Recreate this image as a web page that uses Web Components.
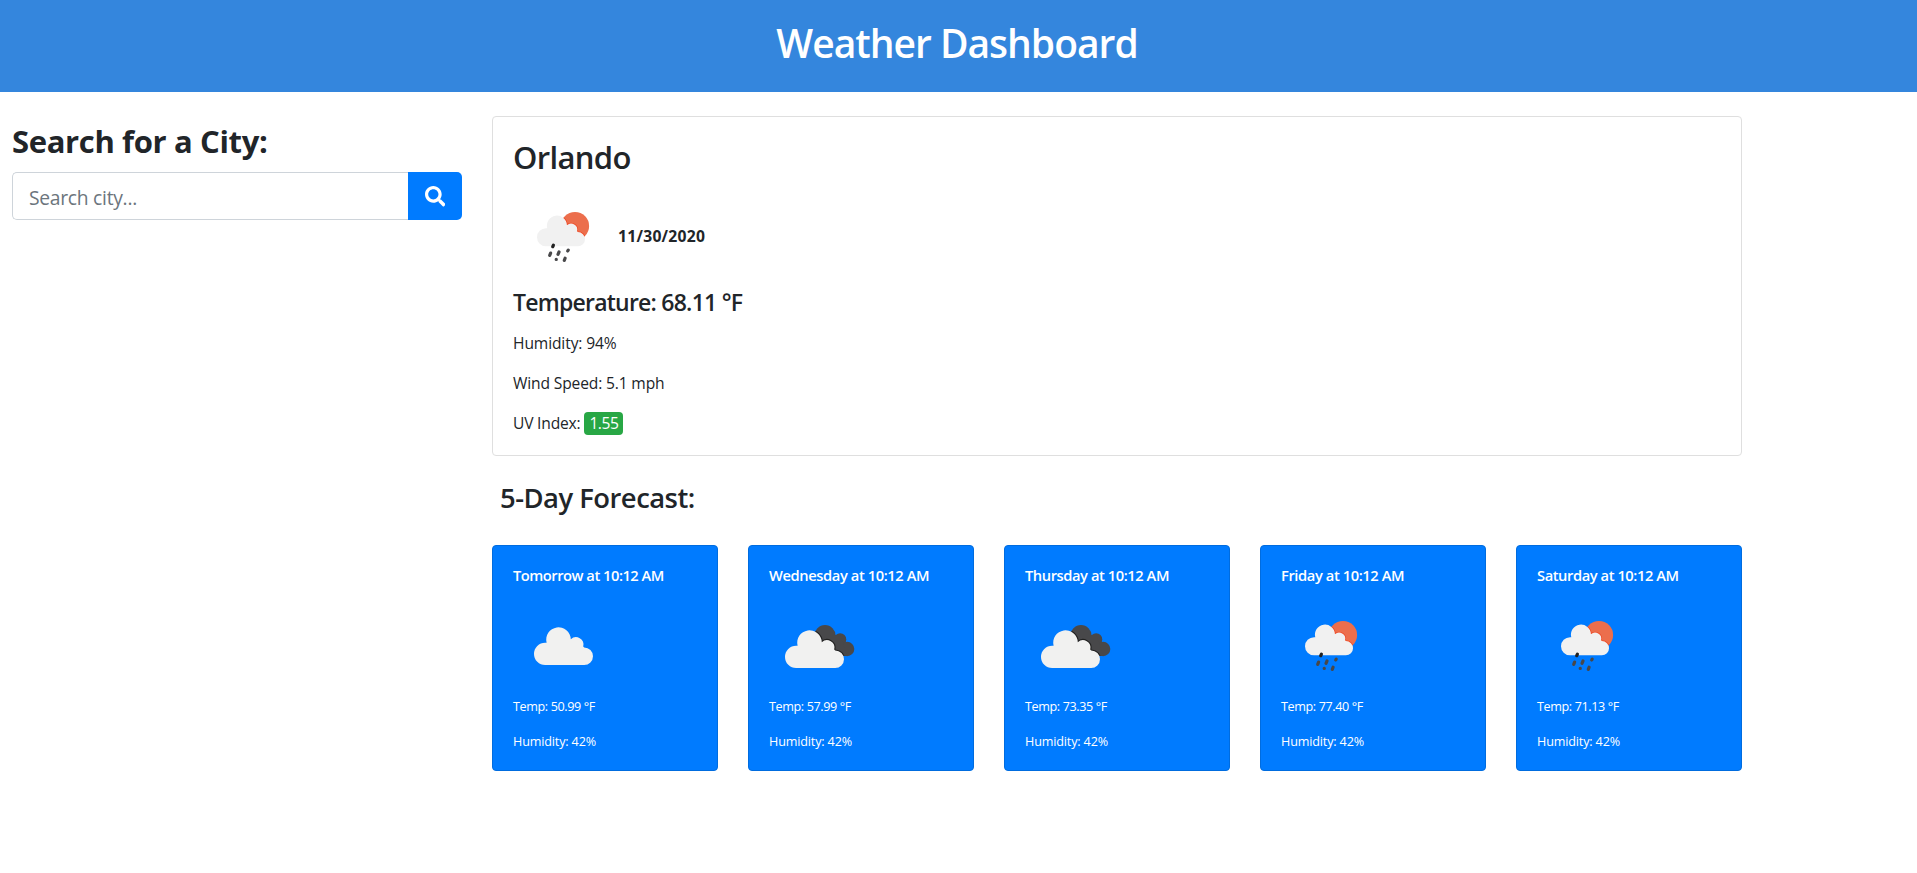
<!DOCTYPE html>
<html lang="en">
<head>
<meta charset="utf-8">
<title>Weather Dashboard</title>
<style>
body { margin: 0; background: #fff; color: #212529; font-family: "Open Sans", "Noto Sans", sans-serif; }
</style>
</head>
<body>
<weather-app></weather-app>
<script>
const define = (name, html, setup) => {
  const template = document.createElement('template');
  template.innerHTML = html;
  customElements.define(name, class extends HTMLElement {
    constructor() {
      super();
      this.attachShadow({ mode: 'open' }).append(template.content.cloneNode(true));
    }
    connectedCallback() { if (setup) setup(this, this.shadowRoot); }
  });
};

define('app-header', `
<style>
:host { display: block; box-sizing: border-box; height: 92px; padding: 18px 3px 0 0; background: #3486dd; color: #fff; text-align: center; }
h1 { margin: 0; font-size: 39px; line-height: 49px; font-weight: 600; letter-spacing: -1px; }
</style>
<h1><slot></slot></h1>`);

define('city-search', `
<style>
:host { display: block; }
h2 { margin: 0 0 12px; font-size: 31px; line-height: 38px; font-weight: 700; letter-spacing: -.35px; }
.group { display: flex; height: 48px; }
input { flex: 1; min-width: 0; box-sizing: border-box; height: 48px; margin: 0; padding: 3px 16px 0; border: 1px solid #ced4da; border-right: 0; border-radius: 5px 0 0 5px; background: #fff; color: #495057; font: 19.3px "Open Sans", sans-serif; letter-spacing: -.28px; outline: 0; }
input::placeholder { color: #6c757d; opacity: 1; }
button { width: 54px; height: 48px; margin: 0; padding: 1px 0 0; border: 0; border-radius: 0 5px 5px 0; background: #007bff; display: flex; align-items: center; justify-content: center; }
svg { width: 20.500px; height: 20.500px; display: block; }
</style>
<h2><slot></slot></h2>
<div class="group">
<input type="text" placeholder="Search city..." aria-label="City">
<button aria-label="Search"><svg viewBox="0 0 512 512"><path fill="#fff" d="M505 442.7L405.3 343c-4.5-4.5-10.6-7-17-7H372c27.6-35.3 44-79.7 44-128C416 93.1 322.9 0 208 0S0 93.1 0 208s93.1 208 208 208c48.300 0 92.700-16.400 128-44v16.300c0 6.400 2.500 12.500 7 17l99.700 99.700c9.400 9.400 24.600 9.400 33.900 0l28.300-28.300c9.400-9.400 9.400-24.600.1-34zM208 336c-70.700 0-128-57.200-128-128 0-70.700 57.200-128 128-128 70.700 0 128 57.200 128 128 0 70.700-57.200 128-128 128z"/></svg></button>
</div>`);

const cloud = 'M32.200 70.100A11.200 11.200 0 0 1 32.200 47.700L33.600 47.700A12.300 12.300 0 1 1 57.800 44.200A7.500 7.500 0 0 1 70.200 51.500L71.200 52.500A8.800 8.800 0 0 1 71.200 70.100Z';
const icons = {
  cloud: `<path fill="#f1f1f0" d="${cloud}"/>`,
  clouds: `<g fill="#48484a"><circle cx="56" cy="40.700" r="10.600"/><circle cx="71.200" cy="44.400" r="6.100"/><circle cx="78.100" cy="54" r="7.200"/><path d="M56 40h15l7 21H56z"/></g>
    <clipPath id="dark"><circle cx="56" cy="40.700" r="10.600"/><circle cx="71.200" cy="44.400" r="6.100"/><circle cx="78.100" cy="54" r="7.200"/><path d="M56 40h15l7 21H56z"/></clipPath>
    <g clip-path="url(#dark)"><path transform="translate(-5 3)" fill="none" stroke="#222" stroke-width="2.200" d="${cloud}"/></g>
    <path transform="translate(-5 3)" fill="#f1f1f0" d="${cloud}"/>`,
  rain: `<circle cx="62" cy="40" r="14.100" fill="#ec6e4c"/>
    <clipPath id="sun"><circle cx="62" cy="40" r="14.100"/></clipPath>
    <g clip-path="url(#sun)"><path transform="translate(6.900 3.300) scale(.814)" fill="none" stroke="#ee4d2a" stroke-width="2" d="${cloud}"/></g>
    <path transform="translate(6.900 3.300) scale(.814)" fill="#f1f1f1" d="${cloud}"/>
    <g stroke="#48484a" stroke-width="3.200" stroke-linecap="round"><path stroke="#222" d="M39.700 60.700l.7-1.500"/><path d="M36.700 69.400l.9-2.300M45 68.300l1-2.300M54.700 65l.5-.8M43.200 73.400h.1M51.300 74.400l.8-2.200"/></g>`
};

define('weather-icon', `
<style>:host { display: block; width: 100px; height: 100px; } svg { display: block; }</style>
<svg width="100" height="100" viewBox="0 0 100 100"></svg>`, (el, root) => {
  root.querySelector('svg').innerHTML = icons[el.getAttribute('kind')] || '';
});

define('uv-badge', `
<style>:host { display: inline-block; box-sizing: border-box; width: 39px; height: 23px; border-radius: 4px; background: #28a745; color: #fff; text-align: center; line-height: 23px; letter-spacing: -.5px; }</style><slot></slot>`);

define('current-weather', `
<style>
:host { display: flex; flex-direction: column; box-sizing: border-box; height: 340px; padding: 21px 20px 0; border: 1px solid #dfdfdf; border-radius: 4px; font-size: 15.600px; }
h2 { margin: 0 0 10px; font-size: 31px; line-height: 38px; font-weight: 600; letter-spacing: -.65px; }
.today { display: flex; align-items: center; gap: 5px; height: 100px; }
time { font-weight: 700; font-size: 15.700px; line-height: 24px; letter-spacing: .25px; }
h3 { margin: 2px 0 14px; font-size: 23px; line-height: 29px; font-weight: 600; letter-spacing: -.76px; }
p { margin: 0 0 16px; line-height: 24px; height: 24px; }
.h { letter-spacing: -.12px; } .w { letter-spacing: -.15px; }
.uv { display: flex; align-items: center; gap: 4px; letter-spacing: -.2px; }
</style>
<h2><slot name="city"></slot></h2>
<div class="today"><weather-icon kind="rain"></weather-icon><time><slot name="date"></slot></time></div>
<h3><slot name="temp"></slot></h3>
<p class="h"><slot name="humidity"></slot></p>
<p class="w"><slot name="wind"></slot></p>
<p class="uv"><span>UV Index:</span><uv-badge><slot name="uv"></slot></uv-badge></p>`);

define('forecast-card', `
<style>
:host { display: block; box-sizing: border-box; height: 226px; padding: 20px; border: 1px solid #006cdf; border-radius: 4px; background: #007bff; color: #fff; font-size: 12.600px; }
h5 { margin: 0 0 11px; font-size: 14.700px; line-height: 18px; font-weight: 600; letter-spacing: var(--track, -.43px); white-space: nowrap; }
p { margin: 2px 0 0; line-height: 20px; letter-spacing: -.38px; }
p + p { margin-top: 15px; letter-spacing: -.15px; }
</style>
<h5><slot></slot></h5><div class="icon"></div>
<p class="temp"></p><p>Humidity: 42%</p>`, (el, root) => {
  const icon = document.createElement('weather-icon');
  icon.setAttribute('kind', el.getAttribute('kind'));
  root.querySelector('.icon').append(icon);
  root.querySelector('.temp').textContent = `Temp: ${el.getAttribute('temp')} °F`;
});

define('forecast-list', `
<style>
:host { display: block; }
h3 { margin: 25px 0 30px 8px; font-size: 27.400px; line-height: 34px; font-weight: 600; letter-spacing: -.5px; }
.cards { display: grid; grid-template-columns: repeat(5, 226px); column-gap: 30px; }
</style>
<h3>5-Day Forecast:</h3><div class="cards"><slot></slot></div>`);

define('weather-app', `
<style>
:host { display: block; }
.layout { display: grid; grid-template-columns: 450px 1250px; column-gap: 30px; padding: 24px 0 0 12px; }
city-search { padding-top: 6px; }
</style>
<app-header>Weather Dashboard</app-header>
<div class="layout">
<city-search>Search for a City:</city-search>
<main>
<current-weather>
<span slot="city">Orlando</span><span slot="date">11/30/2020</span><span slot="temp">Temperature: 68.11 °F</span>
<span slot="humidity">Humidity: 94%</span><span slot="wind">Wind Speed: 5.1 mph</span><span slot="uv">1.55</span>
</current-weather>
<forecast-list>
<forecast-card kind="cloud" temp="50.99" style="--track:-.48px">Tomorrow at 10:12 AM</forecast-card>
<forecast-card kind="clouds" temp="57.99" style="--track:-.4px">Wednesday at 10:12 AM</forecast-card>
<forecast-card kind="clouds" temp="73.35">Thursday at 10:12 AM</forecast-card>
<forecast-card kind="rain" temp="77.40" style="--track:-.4px">Friday at 10:12 AM</forecast-card>
<forecast-card kind="rain" temp="71.13">Saturday at 10:12 AM</forecast-card>
</forecast-list>
</main>
</div>`);
</script>
</body>
</html>
